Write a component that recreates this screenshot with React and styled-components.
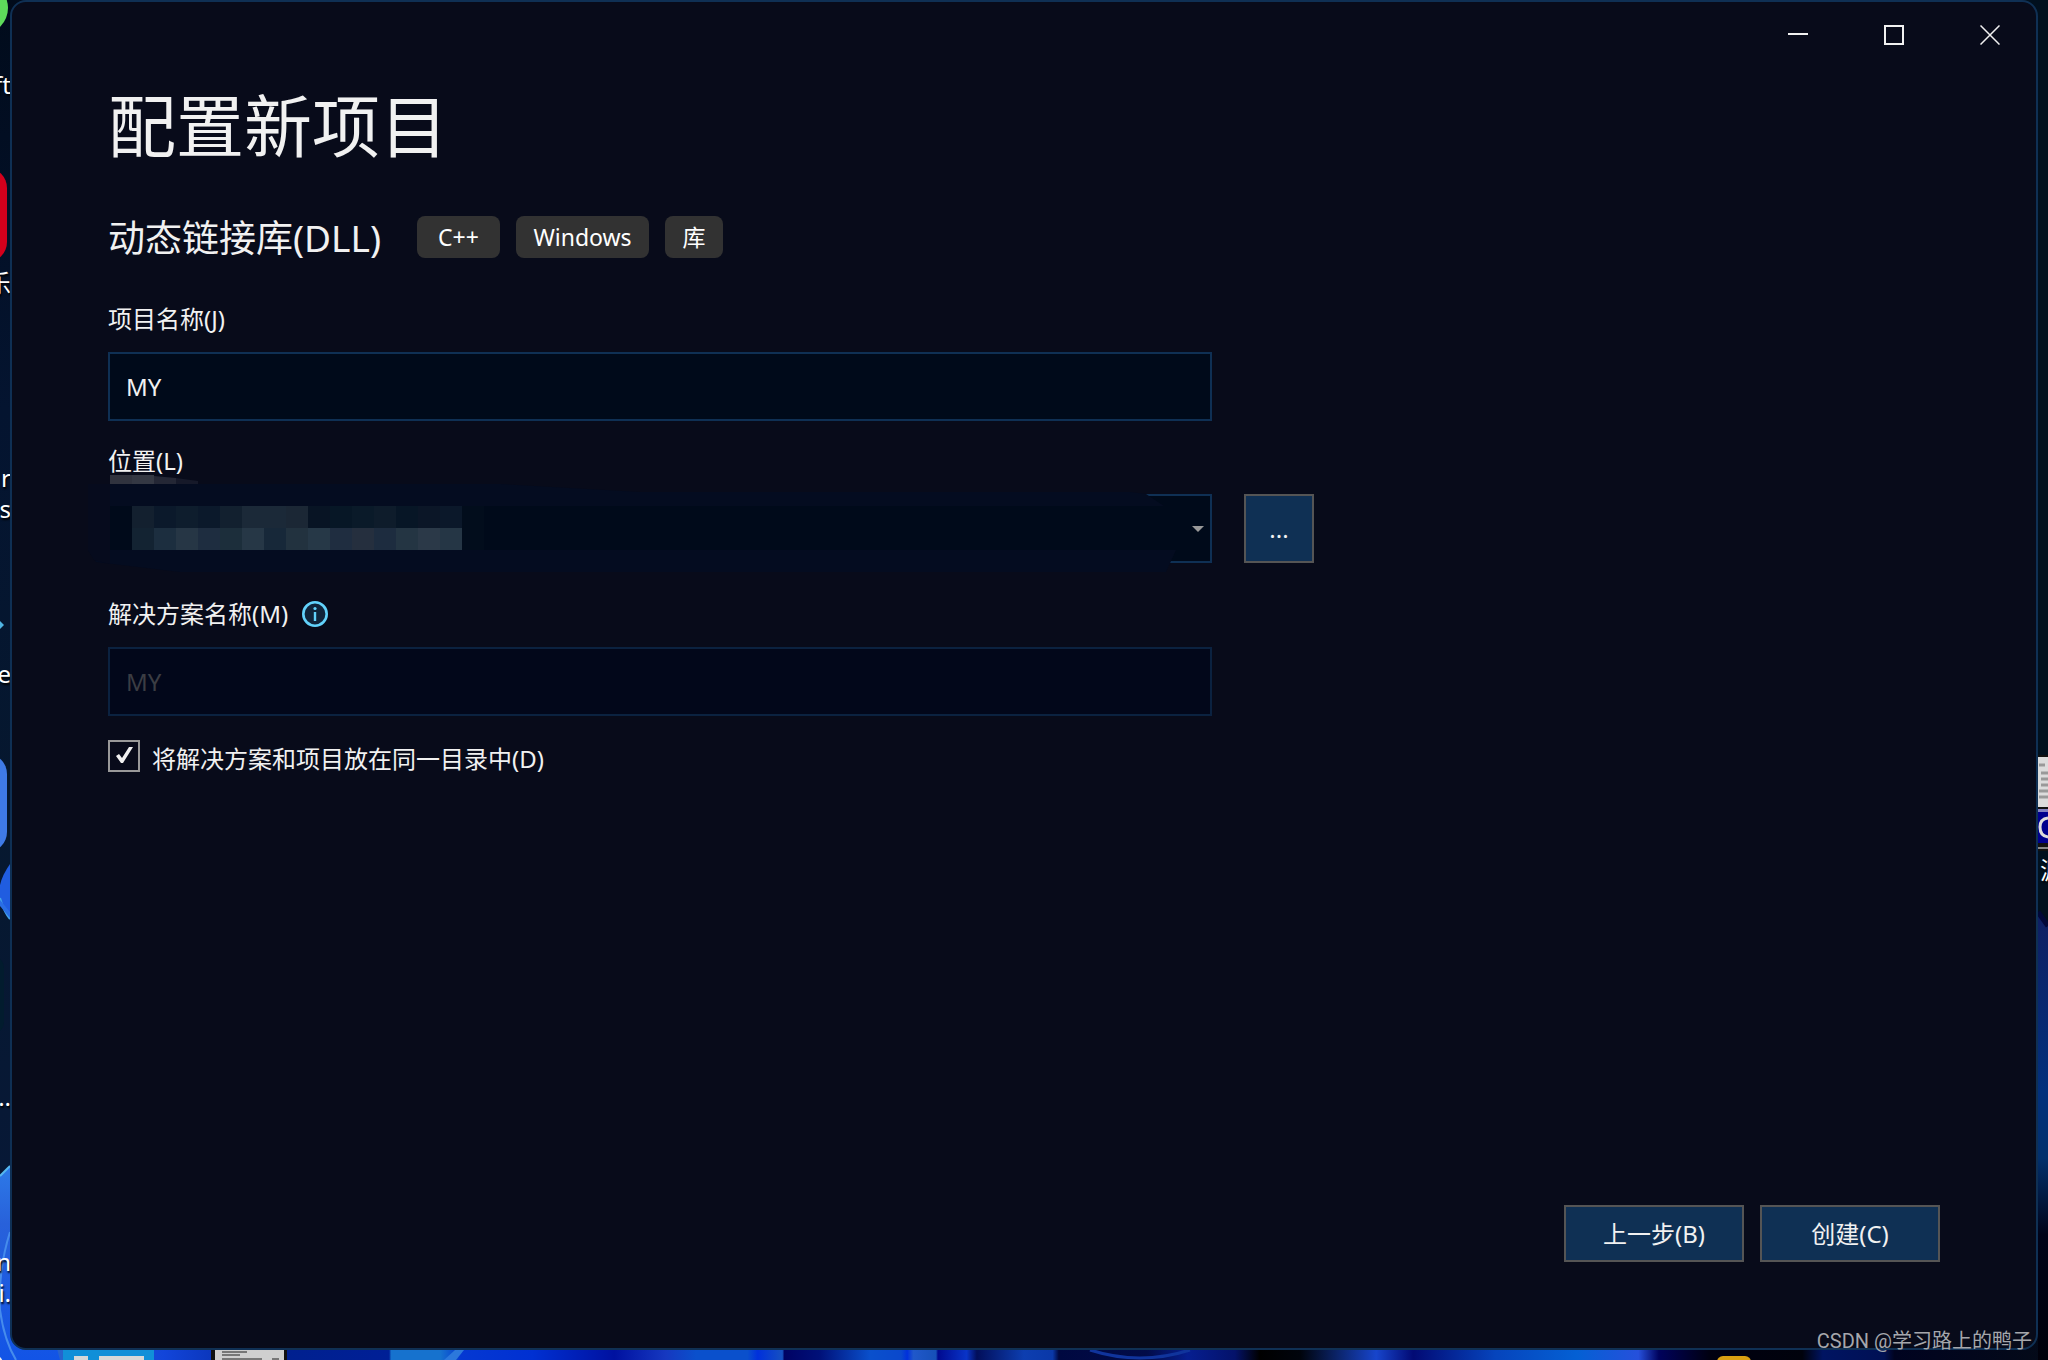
import React, { useState } from "react";
import styled, { createGlobalStyle, css } from "styled-components";

const GlobalStyle = createGlobalStyle`
  *, *::before, *::after { box-sizing: border-box; }
  body {
    margin: 0;
    background: #03102a;
    color: #f1f1f1;
    font-family: "Noto Sans", "Noto Sans CJK SC", sans-serif;
    font-size: 24px;
    line-height: 32px;
  }
  button, input, select { font: inherit; color: inherit; margin: 0; }
`;

const Desktop = styled.div`
  position: relative;
  display: flex;
  min-height: 100vh;
  padding: 0 10px 10px;
  overflow: hidden;
`;

const Wallpaper = styled.svg`
  position: absolute;
  inset: 0;
  width: 100%;
  height: 100%;
`;

const IconLabel = styled.span`
  position: absolute;
  top: ${(p) => p.$top}px;
  ${(p) => (p.$side === "right" ? "left: calc(100% - 8px);" : "right: calc(100% - 11px);")}
  color: #fff;
  white-space: nowrap;
  text-shadow: 1px 2px 2px #000;
`;

const Dialog = styled.main`
  position: relative;
  flex: 1;
  display: flex;
  flex-direction: column;
  border: 2px solid #0f3054;
  border-radius: 16px;
  background: #080b1a;
`;

const TitleBar = styled.header`
  display: flex;
  justify-content: flex-end;
  height: 66px;
  margin-right: -2px;
`;

const CaptionButton = styled.button`
  display: grid;
  place-items: center;
  width: 96px;
  padding: 0;
  border: 0;
  background: none;
`;

const Body = styled.div`
  flex: 1;
  display: flex;
  flex-direction: column;
  padding: 0 96px 86px;
`;

const Title = styled.h1`
  margin: 10px 0 0;
  font-size: 68px;
  line-height: 96px;
  font-weight: 400;
`;

const TemplateRow = styled.div`
  display: flex;
  align-items: center;
  gap: 16px;
  height: 52px;
  margin-top: 37px;
`;

const TemplateName = styled.h2`
  margin: 0 20px 0 0;
  padding-top: 2px;
  font-size: 37px;
  line-height: 52px;
  font-weight: 400;
`;

const Tag = styled.span`
  min-width: ${(p) => p.$min}px;
  padding: 5px 17px;
  border-radius: 8px;
  background: #323232;
  color: #fff;
  font-size: 23px;
  text-align: center;
`;

const Field = styled.div`
  display: flex;
  flex-direction: column;
  gap: 17px;
  margin-top: ${(p) => p.$top}px;
`;

const LabelRow = styled.div`
  display: flex;
  align-items: center;
  gap: 14px;
`;

const ControlRow = styled.div`
  display: flex;
  gap: 32px;
`;

const box = css`
  width: 100%;
  height: 69px;
  padding: 0 16px;
  border: 2px solid #0f3054;
  border-radius: 0;
  background: #000a1a;
`;

const FieldWidth = styled.div`
  position: relative;
  display: grid;
  flex: 0 1 1104px;
  min-width: 0;
  align-items: center;
  & > * { grid-area: 1 / 1; }
`;

const TextBox = styled.input`
  ${box}
  &:disabled {
    border-color: #0b2240;
    background: #02071a;
    color: #3b3d43;
  }
`;

const PathSelect = styled.select`
  ${box}
  appearance: none;
`;

const Arrow = styled.svg`
  position: relative;
  justify-self: end;
  margin-right: 8px;
  pointer-events: none;
`;

const PathMosaic = styled.svg`
  position: absolute;
  left: -20px;
  top: -19px;
  pointer-events: none;
`;

const Button = styled.button`
  width: ${(p) => p.$width}px;
  height: ${(p) => p.$height}px;
  padding: 0;
  border: 2px solid #555;
  background: #0f3054;
`;

const CheckRow = styled.label`
  display: flex;
  align-items: flex-start;
  gap: 12px;
  margin-top: 24px;
`;

const CheckText = styled.span`
  padding-top: 3px;
`;

const CheckCell = styled.span`
  display: grid;
  place-items: center;
  & > * { grid-area: 1 / 1; }
  & > svg { pointer-events: none; }
`;

const CheckBox = styled.input`
  appearance: none;
  width: 32px;
  height: 32px;
  border: 2px solid #999;
  background: #080b1a;
`;

const Footer = styled.footer`
  display: flex;
  justify-content: flex-end;
  gap: 16px;
  margin-top: auto;
`;

const Watermark = styled.span`
  position: absolute;
  right: 16px;
  bottom: 5px;
  color: #a5a7ac;
  font-family: Roboto, "Noto Sans CJK SC", sans-serif;
  font-size: 20px;
  line-height: 28px;
`;

const UPPER = ["#13202f", "#0b192b", "#0e1d2d", "#0b192b", "#12202f", "#1b2938", "#1b2938", "#1b2735", "#081424", "#071726", "#0a1a29", "#0e1c2b", "#071626", "#0b1627", "#0b182a"];
const LOWER = ["#132332", "#1c2e3f", "#263645", "#1e2d40", "#1c2e3b", "#263746", "#172839", "#22323f", "#263847", "#1f2d40", "#252f3e", "#1d2c3f", "#243543", "#2b3948", "#253645"];

function Mosaic() {
  return (
    <PathMosaic width="1100" height="100" viewBox="88 475 1100 100" aria-hidden="true">
      <path d="M88 484H500L640 492H1130L1146 494L1164 506H1177L1176 550L1166 572H180L96 562L88 550Z" fill="#040c20" />
      <path d="M88 484H110V564L94 560L88 550Z" fill="#060b1d" />
      <path d="M110 506H1177V550H110Z" fill="#000a1a" />
      <path d="M110 475H132V484H110Z" fill="#30333e" />
      <path d="M132 475H154V484H132Z" fill="#343843" />
      <path d="M154 476L176 478V484H154Z" fill="#242735" />
      <path d="M176 478L198 481V484H176Z" fill="#161929" />
      {UPPER.map((c, i) => (
        <rect key={i} x={132 + i * 22} y="506" width="22" height="22" fill={c} />
      ))}
      {LOWER.map((c, i) => (
        <rect key={i} x={132 + i * 22} y="528" width="22" height="22" fill={c} />
      ))}
      <rect x="462" y="506" width="22" height="44" fill="#020d1c" />
    </PathMosaic>
  );
}

function DesktopArt() {
  return (
    <Wallpaper viewBox="0 0 2048 1360" preserveAspectRatio="none" aria-hidden="true">
      <defs>
        <linearGradient id="left" x1="0" y1="0" x2="0" y2="1">
          <stop offset="0" stopColor="#010b1b" />
          <stop offset=".3" stopColor="#041430" />
          <stop offset=".6" stopColor="#06182f" />
          <stop offset="1" stopColor="#08183a" />
        </linearGradient>
        <linearGradient id="right" x1="0" y1="0" x2="0" y2="1">
          <stop offset="0" stopColor="#0f1f62" />
          <stop offset=".4" stopColor="#02307c" />
          <stop offset=".55" stopColor="#02306c" />
          <stop offset=".72" stopColor="#000318" />
          <stop offset="1" stopColor="#00000a" />
        </linearGradient>
        <linearGradient id="petal" x1="0" y1="0" x2="0" y2="1">
          <stop offset="0" stopColor="#2d7ae8" />
          <stop offset=".3" stopColor="#2861da" />
          <stop offset="1" stopColor="#1254e6" />
        </linearGradient>
        <linearGradient id="floor" gradientUnits="userSpaceOnUse" x1="0" y1="0" x2="2048" y2="0">
          <stop offset="0" stopColor="#1b5fe2" />
          <stop offset=".03" stopColor="#2763cd" />
          <stop offset=".08" stopColor="#1245da" />
          <stop offset=".14" stopColor="#00208f" />
          <stop offset=".19" stopColor="#001f96" />
          <stop offset=".191" stopColor="#1672ce" />
          <stop offset=".215" stopColor="#1672ce" />
          <stop offset=".225" stopColor="#0538d2" />
          <stop offset=".26" stopColor="#0030d2" />
          <stop offset=".3" stopColor="#0011a0" />
          <stop offset=".325" stopColor="#1638c0" />
          <stop offset=".34" stopColor="#0a50cc" />
          <stop offset=".365" stopColor="#0a50cc" />
          <stop offset=".37" stopColor="#0030dc" />
          <stop offset=".382" stopColor="#1650c0" />
          <stop offset=".383" stopColor="#000264" />
          <stop offset=".4" stopColor="#001078" />
          <stop offset=".425" stopColor="#0a50cc" />
          <stop offset=".44" stopColor="#0a48cc" />
          <stop offset=".443" stopColor="#0030dc" />
          <stop offset=".446" stopColor="#2058ca" />
          <stop offset=".457" stopColor="#1650b8" />
          <stop offset=".458" stopColor="#000a90" />
          <stop offset=".472" stopColor="#0934c8" />
          <stop offset=".477" stopColor="#020e5a" />
          <stop offset=".5" stopColor="#0d3eb0" />
          <stop offset=".514" stopColor="#0a38a8" />
          <stop offset=".517" stopColor="#000840" />
          <stop offset=".56" stopColor="#020c48" />
          <stop offset=".58" stopColor="#061e90" />
          <stop offset=".603" stopColor="#04126a" />
          <stop offset=".615" stopColor="#000000" />
          <stop offset=".635" stopColor="#00040c" />
          <stop offset=".672" stopColor="#1745cc" />
          <stop offset=".69" stopColor="#020a74" />
          <stop offset=".73" stopColor="#0644bc" />
          <stop offset=".77" stopColor="#0460d4" />
          <stop offset=".8" stopColor="#2650dc" />
          <stop offset=".81" stopColor="#00025c" />
          <stop offset=".835" stopColor="#000010" />
          <stop offset=".88" stopColor="#00020c" />
          <stop offset=".89" stopColor="#001462" />
          <stop offset=".92" stopColor="#001054" />
          <stop offset=".925" stopColor="#000320" />
          <stop offset="1" stopColor="#040a18" />
        </linearGradient>
      </defs>
      <rect width="1024" height="1360" fill="url(#left)" />
      <rect x="1024" width="1024" height="1360" fill="#01101e" />
      <rect y="1330" width="2048" height="30" fill="url(#floor)" />

      <circle cx="-18" cy="8" r="26" fill="#5edb5b" />
      <rect x="-80" y="168" width="87" height="94" rx="20" fill="#d4001c" />
      <path d="M-6 615L4 625L-6 635Z" fill="#4fb4e2" />
      <rect x="-80" y="754" width="87" height="98" rx="20" fill="#3f7ae6" />
      <path d="M10 864Q-4 884 0 900Q4 912 10 919Z" fill="#205de0" />
      <path d="M0 898Q4 912 10 919" fill="none" stroke="#43a2e8" strokeWidth="2" />
      <path d="M0 900L10 912V918L0 906Z" fill="#2a6ee4" />
      <rect x="-40" y="956" width="44" height="78" rx="12" fill="#021c2e" />
      <path d="M0 1176L10 1166L60 1360H0Z" fill="url(#petal)" />
      <path d="M0 1176L10 1166" stroke="#55b8f0" strokeWidth="2" />
      <path d="M10 1232Q-2 1270 0 1310Q4 1340 16 1360" fill="none" stroke="#468cec" strokeWidth="2" />
      <circle cx="-7" cy="1364" r="10" fill="#eee" />

      <path d="M2038 912L2048 926V1360H2038Z" fill="url(#right)" />
      <path d="M2038 912L2048 926" stroke="#020838" strokeWidth="5" />
      <rect x="2038" y="755" width="10" height="96" fill="#111" />
      <rect x="2038" y="757" width="10" height="50" fill="#dcdcdc" />
      <path d="M2039 765H2045M2041 773H2048M2041 779H2048M2041 785H2048M2039 791H2048M2039 797H2048" stroke="#999" strokeWidth="3" />
      <rect x="2038" y="809" width="10" height="34" fill="#00008e" />
      <rect x="2038" y="809" width="10" height="3" fill="#8080c0" />
      <path d="M2048 818Q2040 819 2040 827Q2040 836 2048 837" fill="none" stroke="#ddd" strokeWidth="3" />
      <rect x="2038" y="847" width="10" height="2" fill="#888" />

      <rect x="63" y="1350" width="91" height="10" fill="#118fd8" />
      <path d="M74 1356H88V1360H74ZM99 1356H144V1360H99Z" fill="#d8d8d8" />
      <rect x="211" y="1350" width="76" height="10" fill="#111" />
      <rect x="215" y="1350" width="69" height="10" fill="#cfcfcf" />
      <path d="M222 1352H247M222 1355H240M222 1359H262M272 1359H279" stroke="#777" strokeWidth="2" />
      <path d="M455 1350H464L456 1360H444Z" fill="#2c78dc" />
      <path d="M1090 1350Q1140 1366 1190 1350" fill="none" stroke="#10349c" strokeWidth="3" />
      <rect x="1717" y="1356" width="34" height="16" rx="6" fill="#d9a012" />
    </Wallpaper>
  );
}

const DESKTOP_LABELS = [
  { text: "ft", top: 69 },
  { text: "乐", top: 267 },
  { text: "r", top: 462 },
  { text: "s", top: 493 },
  { text: "e", top: 658 },
  { text: "..", top: 1081 },
  { text: "n", top: 1246 },
  { text: "i.", top: 1277 },
  { text: "源", top: 854, side: "right" },
];

export default function App() {
  const [name, setName] = useState("MY");
  const [sameFolder, setSameFolder] = useState(true);

  return (
    <>
      <GlobalStyle />
      <Desktop>
        <DesktopArt />
        {DESKTOP_LABELS.map((l) => (
          <IconLabel key={l.top} $top={l.top} $side={l.side}>{l.text}</IconLabel>
        ))}
        <Dialog>
          <TitleBar>
            <CaptionButton aria-label="最小化">
              <svg width="20" height="20"><path d="M0 9H20" stroke="#f1f1f1" strokeWidth="2" /></svg>
            </CaptionButton>
            <CaptionButton aria-label="最大化">
              <svg width="20" height="20"><rect x="1" y="1" width="18" height="18" fill="none" stroke="#f1f1f1" strokeWidth="2" /></svg>
            </CaptionButton>
            <CaptionButton aria-label="关闭">
              <svg width="20" height="20"><path d="M.5 .5L19.5 19.5M19.5 .5L.5 19.5" stroke="#f1f1f1" strokeWidth="1.5" /></svg>
            </CaptionButton>
          </TitleBar>
          <Body>
            <Title>配置新项目</Title>
            <TemplateRow>
              <TemplateName>动态链接库(DLL)</TemplateName>
              <Tag $min={83}>C++</Tag>
              <Tag $min={133}>Windows</Tag>
              <Tag $min={58}>库</Tag>
            </TemplateRow>

            <Field $top={40}>
              <label htmlFor="project-name">项目名称(J)</label>
              <ControlRow>
                <FieldWidth>
                  <TextBox id="project-name" value={name} onChange={(e) => setName(e.target.value)} />
                </FieldWidth>
              </ControlRow>
            </Field>

            <Field $top={24}>
              <label htmlFor="location">位置(L)</label>
              <ControlRow>
                <FieldWidth>
                  <PathSelect id="location" />
                  <Mosaic />
                  <Arrow width="12" height="6"><path d="M0 0H12L6 6Z" fill="#999" /></Arrow>
                </FieldWidth>
                <Button $width={70} $height={69} aria-label="浏览">...</Button>
              </ControlRow>
            </Field>

            <Field $top={35}>
              <LabelRow>
                <label htmlFor="solution-name">解决方案名称(M)</label>
                <svg width="26" height="26" viewBox="0 0 26 26" aria-hidden="true">
                  <circle cx="13" cy="13" r="11.7" fill="#10243a" stroke="#62d2fb" strokeWidth="2.6" />
                  <path d="M13 11V20" stroke="#62d2fb" strokeWidth="2.4" />
                  <circle cx="13" cy="7.5" r="1.6" fill="#62d2fb" />
                </svg>
              </LabelRow>
              <ControlRow>
                <FieldWidth>
                  <TextBox id="solution-name" value={name} disabled readOnly />
                </FieldWidth>
              </ControlRow>
            </Field>

            <CheckRow>
              <CheckCell>
                <CheckBox type="checkbox" checked={sameFolder} onChange={(e) => setSameFolder(e.target.checked)} />
                {sameFolder && (
                  <svg width="20" height="20" viewBox="0 0 20 20">
                    <path d="M2 10L5 8L8 12L15 1H19L9 17H7Z" fill="#f1f1f1" />
                  </svg>
                )}
              </CheckCell>
              <CheckText>将解决方案和项目放在同一目录中(D)</CheckText>
            </CheckRow>

            <Footer>
              <Button $width={180} $height={57}>上一步(B)</Button>
              <Button $width={180} $height={57}>创建(C)</Button>
            </Footer>
          </Body>
        </Dialog>
        <Watermark>CSDN @学习路上的鸭子</Watermark>
      </Desktop>
    </>
  );
}
